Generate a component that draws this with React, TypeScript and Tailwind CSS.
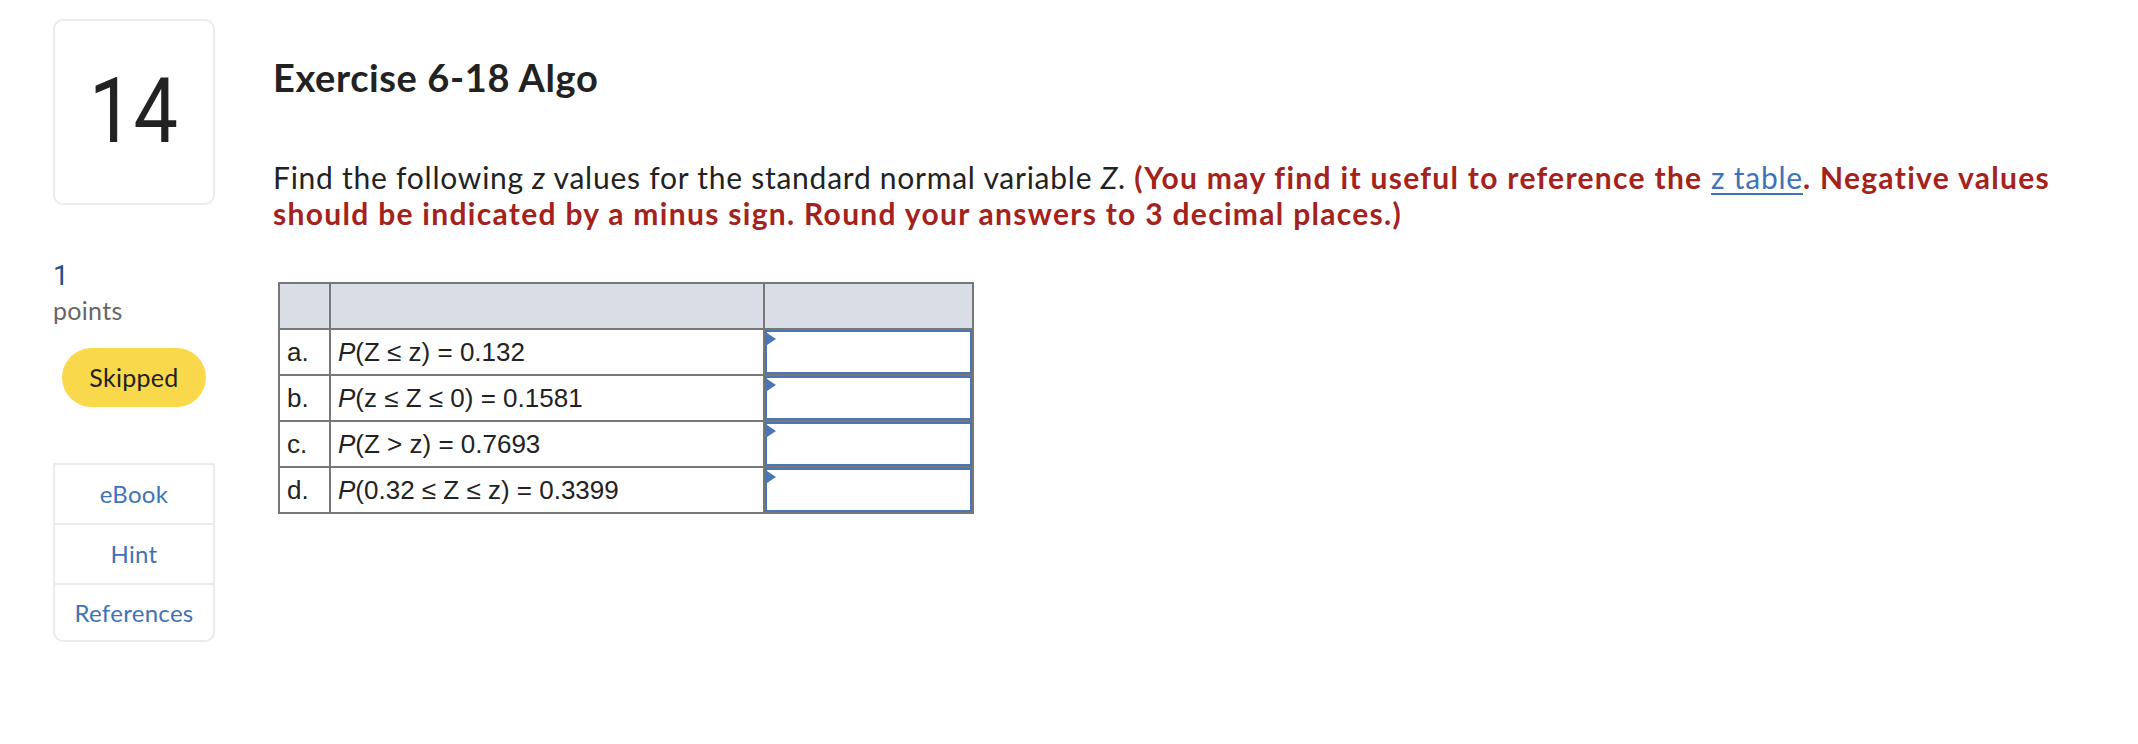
export default function App() {
  const rows = [
    { l: "a.", t: "(Z ≤ z) = 0.132" },
    { l: "b.", t: "(z ≤ Z ≤ 0) = 0.1581" },
    { l: "c.", t: "(Z > z) = 0.7693" },
    { l: "d.", t: "(0.32 ≤ Z ≤ z) = 0.3399" },
  ];
  return (
    <div className="w-[2138px] h-[744px] bg-white text-[#222] flex items-start pt-[19px] pl-[53px] font-['Lato',sans-serif]">
      <div className="w-[162px] shrink-0 flex flex-col">
        <div className="h-[186px] border-2 border-[#ebebeb] rounded-[10px] flex items-center justify-center text-[90px] leading-none text-[#222] font-['Roboto',sans-serif]">
          <span className="inline-block scale-x-[0.88]">14</span>
        </div>
        <div className="mt-[53px] text-[28px] leading-[35px] text-[#22508f] font-['Roboto',sans-serif]">1</div>
        <div className="text-[25px] leading-[35px] text-[#666] tracking-[0.3px]">points</div>
        <div className="mt-[20px] ml-[9px] w-[144px] h-[59px] rounded-full bg-[#f9d94b] flex items-center justify-center text-[25px] text-[#222] tracking-[0.3px]">
          Skipped
        </div>
        <div className="mt-[56px] border-2 border-[#ebebeb] rounded-b-[10px] flex flex-col text-[24px] text-[#3f73b7] tracking-[0.3px]">
          <div className="h-[58px] flex items-center justify-center">eBook</div>
          <div className="h-[60px] border-t-2 border-[#ebebeb] flex items-center justify-center">Hint</div>
          <div className="h-[57px] border-t-2 border-[#ebebeb] flex items-center justify-center">References</div>
        </div>
      </div>
      <div className="ml-[58px] flex flex-col items-start">
        <h1 className="mt-[35px] text-[38px] leading-[46px] font-bold text-[#222] tracking-[0.6px]">Exercise 6-18 Algo</h1>
        <p className="mt-[59px] w-[1800px] text-[30px] leading-[36px] text-[#222] tracking-[0.75px]">
          Find the following <i>z</i> values for the standard normal variable <i>Z</i>.{" "}
          <b className="text-[#a4221c] tracking-[1.3px]">
            (You may find it useful to reference the{" "}
            <span className="font-normal tracking-[0.75px] text-[#3f73b7] underline underline-offset-[4px] decoration-2">z table</span>. Negative values
            should be indicated by a minus sign. Round your answers to 3 decimal places.)
          </b>
        </p>
        <table className="mt-[51px] ml-[5px] w-[694px] table-fixed border-collapse border-2 border-[#777] font-['Liberation_Sans',Arial,sans-serif] text-[26px] text-[#222]">
          <colgroup>
            <col className="w-[51px]" />
            <col className="w-[434px]" />
            <col className="w-[209px]" />
          </colgroup>
          <tbody>
            <tr className="bg-[#d9dde6]">
              <td className="h-[46px] border-2 border-[#777]"></td>
              <td className="h-[46px] border-2 border-[#777]"></td>
              <td className="h-[46px] border-2 border-[#777]"></td>
            </tr>
            {rows.map((r) => (
              <tr key={r.l}>
                <td className="h-[46px] border-2 border-[#777] p-0 pl-[7px]">{r.l}</td>
                <td className="h-[46px] border-2 border-[#777] p-0 pl-[7px] whitespace-nowrap">
                  <i>P</i>
                  {r.t}
                </td>
                <td className="h-[46px] border-2 border-[#777] p-0">
                  <div className="relative h-[44px] border-2 border-[#4a76b5] bg-white">
                    <div className="absolute left-0 top-[1px] w-0 h-0 border-y-[6px] border-y-transparent border-l-[9px] border-l-[#4a76b5]"></div>
                  </div>
                </td>
              </tr>
            ))}
          </tbody>
        </table>
      </div>
    </div>
  );
}
